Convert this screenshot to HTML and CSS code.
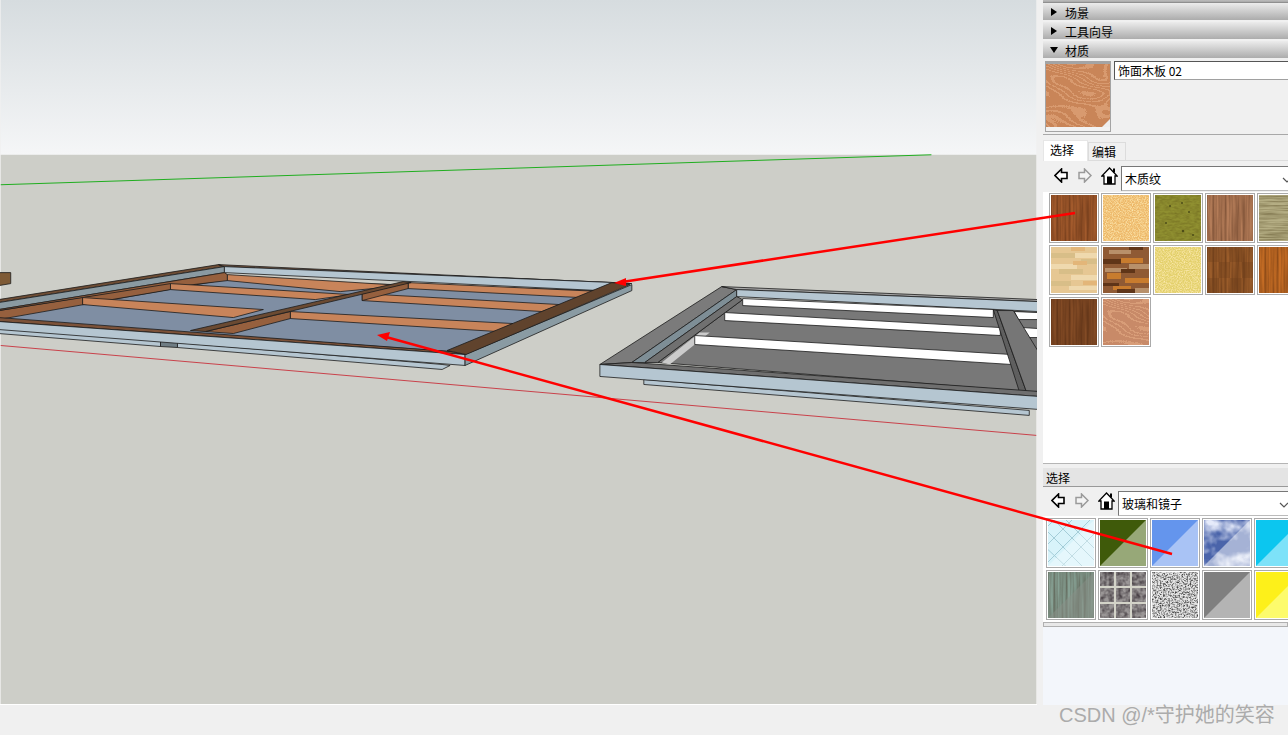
FILE: index.html
```html
<!DOCTYPE html>
<html lang="zh">
<head>
<meta charset="utf-8">
<title>材质</title>
<link rel="stylesheet" href="styles.css">
</head>
<body>
<svg class="defs" width="0" height="0" aria-hidden="true">
  <defs>
    <linearGradient id="sky" x1="0" y1="0" x2="0" y2="1"><stop offset="0" stop-color="#d6dcdf"/><stop offset="1" stop-color="#f5f6f7"/></linearGradient>
    <filter id="grainV" x="0" y="0" width="100%" height="100%" color-interpolation-filters="sRGB"><feTurbulence type="fractalNoise" baseFrequency=".5 .02" numOctaves="2" seed="4"/><feColorMatrix values="0 0 0 0 .15 0 0 0 0 .05 0 0 0 0 0 .7 0 0 0 -.2"/><feMerge><feMergeNode in="SourceGraphic"/><feMergeNode/></feMerge></filter>
    <filter id="grainH" x="0" y="0" width="100%" height="100%" color-interpolation-filters="sRGB"><feTurbulence type="fractalNoise" baseFrequency=".03 .6" numOctaves="3" seed="9"/><feColorMatrix values="0 0 0 0 .3 0 0 0 0 .25 0 0 0 0 .1 1 0 0 0 -.33"/><feMerge><feMergeNode in="SourceGraphic"/><feMergeNode/></feMerge></filter>
    <filter id="speck" x="0" y="0" width="100%" height="100%" color-interpolation-filters="sRGB"><feTurbulence type="fractalNoise" baseFrequency=".85" numOctaves="2" seed="7"/><feColorMatrix values="0 0 0 0 1 0 0 0 0 .93 0 0 0 0 .72 2 0 0 0 -.75"/><feMerge><feMergeNode in="SourceGraphic"/><feMergeNode/></feMerge></filter>
    <filter id="soft" x="0" y="0" width="100%" height="100%" color-interpolation-filters="sRGB"><feTurbulence type="fractalNoise" baseFrequency=".2 .5" numOctaves="2" seed="3"/><feColorMatrix values="0 0 0 0 .3 0 0 0 0 .25 0 0 0 0 .05 .6 0 0 0 -.2"/><feMerge><feMergeNode in="SourceGraphic"/><feMergeNode/></feMerge></filter>
    <filter id="swirl" x="0" y="0" width="100%" height="100%" color-interpolation-filters="sRGB"><feTurbulence type="fractalNoise" baseFrequency=".014 .03" numOctaves="2" seed="12"/><feComponentTransfer><feFuncR type="discrete" tableValues="0 0 1 0 0 1 0 0 1 0 0 1 0 0 1 0 0 1 0 0 1 0 0 1 0 0 1 0 0 1 0 0 1 0 0 1 0 0 1 0 0 1"/></feComponentTransfer><feColorMatrix values="0 0 0 0 .93 0 0 0 0 .72 0 0 0 0 .56 .42 0 0 0 0"/><feMerge><feMergeNode in="SourceGraphic"/><feMergeNode/></feMerge></filter>
    <filter id="clouds" x="0" y="0" width="100%" height="100%" color-interpolation-filters="sRGB"><feTurbulence type="fractalNoise" baseFrequency=".06" numOctaves="3" seed="5"/><feColorMatrix values="0 0 0 0 .9 0 0 0 0 .92 0 0 0 0 .98 2.4 0 0 0 -1"/><feMerge><feMergeNode in="SourceGraphic"/><feMergeNode/></feMerge></filter>
    <filter id="stone" x="0" y="0" width="100%" height="100%" color-interpolation-filters="sRGB"><feTurbulence type="fractalNoise" baseFrequency=".6" numOctaves="2" seed="8"/><feColorMatrix values="0 0 0 0 .25 0 0 0 0 .25 0 0 0 0 .25 2.6 0 0 0 -1.05"/><feMerge><feMergeNode in="SourceGraphic"/><feMergeNode/></feMerge></filter>
    <filter id="slate" x="0" y="0" width="100%" height="100%" color-interpolation-filters="sRGB"><feTurbulence type="fractalNoise" baseFrequency=".22" numOctaves="2" seed="6"/><feColorMatrix values="0 0 0 0 .25 0 0 0 0 .22 0 0 0 0 .24 1.8 0 0 0 -.6"/><feMerge><feMergeNode in="SourceGraphic"/><feMergeNode/></feMerge></filter>
    <symbol id="back" viewBox="0 0 14 15"><path d="M7.500 1 1 7.500 7.500 14V10.500H13V4.500H7.500Z" fill="#fff" stroke="#000" stroke-width="1.600"/></symbol>
    <symbol id="fwd" viewBox="0 0 14 15"><path d="M6.500 1 13 7.500 6.500 14V10.500H1V4.500H6.500Z" fill="#f4f4f4" stroke="#9a9a9a" stroke-width="1.500"/></symbol>
    <symbol id="home" viewBox="0 0 17 18"><path d="M8.500 1 .8 9H3V17H14V9H16.200Z" fill="#fff" stroke="#000" stroke-width="1.300"/><rect x="6" y="9.500" width="5" height="7.500" fill="#000"/><rect x="12" y="1.500" width="2" height="4" fill="#000"/></symbol>
  </defs>
</svg>

<div class="app">
  <div class="workspace">
    <svg class="scene" width="1037" height="705" viewBox="0 0 1037 705">
      <rect width="1037" height="156" fill="url(#sky)"/>
      <rect y="155" width="1037" height="550" fill="#cdcec8"/>
      <line x1="0" y1="185" x2="932" y2="155" stroke="#1fae1f" stroke-width="1"/>
      <line x1="0" y1="346" x2="1037" y2="436" stroke="#c9414a" stroke-width="1"/>

      <g stroke="#1c1c1c" stroke-width=".8" stroke-linejoin="round">
        <!-- stub at left -->
        <polygon points="-2,273 10,273 10,284 -2,286" fill="#7e5a35"/>

        <!-- left frame -->
        <polygon points="-2,328 160,341 160,347 -2,334" fill="#b5c6d1"/>
        <polygon points="160,341 177,343 177,348 160,347" fill="#6f7d84"/>
        <polygon points="177,343 442,365 450,366 442,370 177,348" fill="#b5c6d1"/>
        <polygon points="-2,318 -2,322 225,282 225,275 -2,311" fill="#96603e"/>
        <polygon points="-2,320 225,280 600,291 450,352" fill="#7f8ea3"/>
        <polygon points="-2,300 218,265 224,267 -2,303" fill="#6e4d35"/>
        <polygon points="-2,303 224,267 224,273 -2,310" fill="#8a9aa2"/>
        <polygon points="-2,310 224,273 227,275 227,281 82,298 -2,311" fill="#96603e"/>
        <polygon points="82,298 170,284 170,290 82,305" fill="#96603e"/>
        <polygon points="218,265 632,284 615,283 224,267" fill="#7b5a44"/>
        <polygon points="224,267 615,283 600,291 224,273" fill="#b5c6d1"/>

        <polygon points="227,275 405,286 340,292 227,281" fill="#c8845a"/>
        <polygon points="408,283 603,292 580,298 408,289" fill="#c8845a"/>
        <polygon points="170,284 350,295 315,300 170,290" fill="#c8845a"/>
        <polygon points="362,294 560,305 542,312 362,301" fill="#c8845a"/>
        <polygon points="82,298 263,310 233,318 82,305" fill="#c8845a"/>
        <polygon points="290,312 513,324 497,332 290,319" fill="#c8845a"/>

        <polygon points="205,332 290,312 290,319 233,334" fill="#96603e"/>
        <polygon points="362,294 408,283 408,289 362,301" fill="#96603e"/>
        <polygon points="190,331 403,282 411,283 205,332" fill="#6b4a32"/>

        <polygon points="-2,318 450,352 465,355 -2,322" fill="#7c5239"/>
        <polygon points="-2,322 465,355 465,366 -2,330" fill="#b5c6d1"/>
        <polygon points="465,355 632,285 632,291 465,366" fill="#8a9ba3"/>
        <polygon points="447,351 612,283 630,285 466,355" fill="#60432d"/>

        <!-- right frame -->
        <polygon points="644,380 1030,411 1030,416 644,385" fill="#b5c6d1"/>
        <polygon points="658,363 743,300 1039,313 1039,393" fill="#787878"/>
        <polygon points="600,365 722,287 737,290 632,363" fill="#7b7b7b"/>
        <polygon points="632,363 737,290 737,297 645,363" fill="#7e8e96"/>
        <polygon points="645,363 737,297 743,300 658,363" fill="#707070"/>
        <polygon points="662,363 700,333 710,333 670,365" fill="#cbcbcb" stroke="none"/>
        <polygon points="722,287 1039,300 1039,302 737,290" fill="#a5a5a5"/>
        <polygon points="737,290 1039,302 1039,312 737,297" fill="#b5c6d1"/>
        <polygon points="743,299 994,310 994,318 743,306" fill="#fff"/>
        <polygon points="725,313 1001,328 1001,336 725,321" fill="#fff"/>
        <polygon points="695,336 1012,355 1012,365 695,345" fill="#fff"/>
        <polygon points="1015,312 1039,313 1039,320 1019,320" fill="#fff"/>
        <polygon points="1023,328 1039,329 1039,338 1030,338" fill="#fff"/>
        <polygon points="994,310 998,311 1027,392 1020,392" fill="#5f5f5f"/>
        <polygon points="998,311 1014,311 1039,352 1039,392 1027,392" fill="#767676"/>
        <polygon points="632,363 1039,392 1039,397 600,365" fill="#6f6f6f"/>
        <polygon points="600,365 1039,397 1039,410 600,377" fill="#b5c6d1"/>
      </g>
    </svg>

    <aside class="panel">
      <div class="tray-top"></div>
      <div class="tray collapsed"><i class="tri right"></i>场景</div>
      <div class="tray collapsed"><i class="tri right"></i>工具向导</div>
      <div class="tray"><i class="tri down"></i>材质</div>

      <div class="summary">
        <div class="preview">
          <svg width="64" height="63"><rect width="64" height="63" fill="#c98558" filter="url(#swirl)"/><polygon points="64,55 64,63 56,63" fill="#eee"/></svg>
        </div>
        <div class="name">饰面木板 02</div>
      </div>

      <div class="tabs">
        <div class="tab active">选择</div>
        <div class="tab">编辑</div>
      </div>

      <div class="toolbar">
        <svg class="ic back"><use href="#back"/></svg>
        <svg class="ic fwd"><use href="#fwd"/></svg>
        <svg class="ic home"><use href="#home"/></svg>
        <div class="combo">木质纹<svg class="chev" width="10" height="6"><path d="M1 1 5 5 9 1" fill="none" stroke="#555" stroke-width="1.200"/></svg></div>
      </div>

      <div class="wells wood">
        <div class="row">
          <svg class="well"><rect width="46" height="46" fill="#a25a2c" filter="url(#grainV)"/></svg>
          <svg class="well"><rect width="46" height="46" fill="#edb869" filter="url(#speck)"/></svg>
          <svg class="well"><rect width="46" height="46" fill="#8f8f30" filter="url(#soft)"/><g fill="#4d4c18"><circle cx="15" cy="11" r="1"/><circle cx="27" cy="8" r="1"/><circle cx="34" cy="17" r="1"/><circle cx="11" cy="28" r="1"/><circle cx="28" cy="36" r="1.200"/><circle cx="38" cy="40" r="1"/></g></svg>
          <svg class="well"><rect width="46" height="46" fill="#b47c58" filter="url(#grainV)"/></svg>
          <svg class="well"><rect width="46" height="46" fill="#b5ae84" filter="url(#grainH)"/></svg>
        </div>
        <div class="row">
          <svg class="well"><rect width="46" height="46" fill="#e6c793"/><g fill="#d8be88"><rect y="6" width="24" height="5"/><rect x="30" y="12" width="16" height="5"/><rect x="8" y="22" width="24" height="5"/><rect y="34" width="20" height="5"/></g><g fill="#efd9ae"><rect x="24" y="6" width="22" height="5"/><rect y="17" width="26" height="5"/><rect x="20" y="28" width="26" height="5"/><rect x="18" y="39" width="28" height="4"/></g><g fill="#e3b679"><rect x="20" width="14" height="4"/><rect x="22" y="14" width="14" height="4"/><rect x="32" y="34" width="14" height="4"/></g></svg>
          <svg class="well"><rect width="46" height="46" fill="#8f5a34"/><g fill="#c87c2e"><rect x="18" y="11" width="22" height="5"/><rect x="4" y="26" width="14" height="6"/><rect x="22" y="31" width="24" height="5"/><rect x="10" y="39" width="18" height="4"/></g><g fill="#b8906a"><rect x="6" y="3" width="22" height="4"/><rect x="26" y="17" width="20" height="5"/><rect x="2" y="21" width="22" height="4"/><rect x="32" y="41" width="14" height="5"/></g><g fill="#5f3518"><rect y="12" width="18" height="5"/><rect x="18" y="22" width="14" height="4"/><rect y="36" width="16" height="3"/><rect x="26" y="0" width="14" height="3"/><rect x="14" y="42" width="18" height="4"/></g></svg>
          <svg class="well"><rect width="46" height="46" fill="#e3d06b" filter="url(#speck)"/></svg>
          <svg class="well"><rect width="46" height="46" fill="#9a5c2a" filter="url(#grainV)"/><g fill="#6b3d1a" opacity=".3"><rect width="12" height="15"/><rect x="23" width="12" height="15"/><rect x="12" y="15" width="11" height="16"/><rect x="35" y="15" width="11" height="16"/><rect y="31" width="12" height="15"/><rect x="23" y="31" width="12" height="15"/></g></svg>
          <svg class="well"><rect width="46" height="46" fill="#c46c24" filter="url(#grainV)"/></svg>
        </div>
        <div class="row">
          <svg class="well"><rect width="46" height="46" fill="#834b25" filter="url(#grainV)"/></svg>
          <svg class="well"><rect width="46" height="46" fill="#c88a68" filter="url(#swirl)"/></svg>
        </div>
      </div>

      <div class="sep"></div>

      <div class="sub-head">选择</div>
      <div class="toolbar second">
        <svg class="ic back"><use href="#back"/></svg>
        <svg class="ic fwd"><use href="#fwd"/></svg>
        <svg class="ic home"><use href="#home"/></svg>
        <div class="combo">玻璃和镜子<svg class="chev" width="10" height="6"><path d="M1 1 5 5 9 1" fill="none" stroke="#555" stroke-width="1.200"/></svg></div>
      </div>

      <div class="wells glass">
        <div class="row">
          <svg class="well"><rect width="46" height="46" fill="#d8f3fa"/><path d="M-10 16 16 -10M-10 34 34 -10M-4 46 46 -4M14 46 46 14M-2 10 36 48M-2 -8 48 42M10 -8 50 32M-6 24 24 52" stroke="#a4cdd8" stroke-width="1" fill="none"/><polygon points="46,0 46,46 0,46" fill="#fff" opacity=".35"/></svg>
          <svg class="well"><rect width="46" height="46" fill="#3f5a0a"/><polygon points="46,0 46,46 0,46" fill="#97a878"/></svg>
          <svg class="well"><rect width="46" height="46" fill="#6495ed"/><polygon points="46,0 46,46 0,46" fill="#a9c3f5"/></svg>
          <svg class="well"><rect width="46" height="46" fill="#4a64aa" filter="url(#clouds)"/><polygon points="46,0 46,46 0,46" fill="#fff" opacity=".5"/></svg>
          <svg class="well"><rect width="46" height="46" fill="#0cc6ef"/><polygon points="46,0 46,46 0,46" fill="#7de2f9"/></svg>
        </div>
        <div class="row">
          <svg class="well"><rect width="46" height="46" fill="#86a093" filter="url(#grainV)"/><polygon points="46,0 46,46 0,46" fill="#8a8f88" opacity=".5"/></svg>
          <svg class="well"><rect width="46" height="46" fill="#9a9696" filter="url(#slate)"/><path d="M15 0V46M31 0V46M0 15H46M0 31H46" stroke="#d3d3c8" stroke-width="2" fill="none"/></svg>
          <svg class="well"><rect width="46" height="46" fill="#e4e4e4" filter="url(#stone)"/></svg>
          <svg class="well"><rect width="46" height="46" fill="#7f7f7f"/><polygon points="46,0 46,46 0,46" fill="#b4b4b4"/></svg>
          <svg class="well"><rect width="46" height="46" fill="#fdf01a"/><polygon points="46,0 46,46 0,46" fill="#fdfb6c"/></svg>
        </div>
      </div>
      <div class="hscroll"></div>
      <div class="rest"></div>
    </aside>
  </div>
  <footer class="status"></footer>

  <svg class="arrows" width="1288" height="735" viewBox="0 0 1288 735">
    <g stroke="#f00" stroke-width="2.500" fill="#f00">
      <line x1="1075" y1="213" x2="622" y2="282"/>
      <polygon points="614,283 626,278 626,286" stroke="none"/>
      <line x1="1172" y1="554" x2="386" y2="337"/>
      <polygon points="377,335 390,332 387,341" stroke="none"/>
    </g>
  </svg>
  <div class="watermark">CSDN @/*守护她的笑容</div>
</div>
</body>
</html>
```

FILE: styles.css
```css
* { box-sizing: border-box; }

html, body {
  margin: 0;
  width: 1288px;
  height: 735px;
  overflow: hidden;
  background: #f0f0f0;
  font-family: "Noto Sans CJK SC", "Liberation Sans", sans-serif;
  font-size: 12px;
  color: #000;
}

.defs { position: absolute; }

.app {
  position: relative;
  width: 1288px;
  height: 735px;
  display: flex;
  flex-direction: column;
}

.workspace {
  display: flex;
  height: 705px;
}

.scene {
  display: block;
  flex: none;
  border-bottom: 1px solid #fff;
}

.panel {
  flex: 1;
  min-width: 0;
  overflow: hidden;
  padding-left: 6px;
  display: flex;
  flex-direction: column;
  background: #f0f0f0;
}

.tray-top {
  flex: none;
  height: 3px;
  background: linear-gradient(#bdbdbd, #a8a8a8);
  border-bottom: 1px solid #8f8f8f;
}

.tray {
  flex: none;
  height: 17px;
  margin-bottom: 2px;
  padding-left: 22px;
  position: relative;
  line-height: 19px;
  background: linear-gradient(#ececec, #dcdcdc 25%, #acacac);
  white-space: nowrap;
}

.tri {
  position: absolute;
  left: 8px;
  width: 0;
  height: 0;
  border-style: solid;
  border-color: transparent;
}

.tri.right {
  top: 5px;
  border-width: 4px 0 4px 6px;
  border-left-color: #000;
}

.tri.down {
  top: 6px;
  left: 7px;
  border-width: 6px 4px 0 4px;
  border-top-color: #000;
}

.summary {
  flex: none;
  display: flex;
  align-items: flex-start;
  gap: 3px;
  height: 75px;
  padding: 1px 0 0 2px;
  border-bottom: 1px solid #a8a8a8;
}

.preview {
  flex: none;
  width: 66px;
  height: 71px;
  border: 1px solid #a4a4a4;
  border-top-width: 3px;
  background: #f2f2f2;
}

.preview svg { display: block; }

.name {
  flex: none;
  width: 220px;
  height: 19px;
  padding-left: 3px;
  line-height: 18px;
  background: #fff;
  border: 1px solid #a0a0a0;
  border-top-color: #555;
  border-left-color: #555;
  white-space: nowrap;
}

.tabs {
  flex: none;
  display: flex;
  align-items: flex-end;
  height: 26px;
  background: #f0f0f0;
  border-bottom: 1px solid #dcdcdc;
}

.tab {
  width: 38px;
  height: 18px;
  padding-left: 3px;
  line-height: 17px;
  border: 1px solid #dcdcdc;
  border-bottom: 0;
}

.tab.active {
  width: 45px;
  height: 21px;
  margin-bottom: -1px;
  padding-left: 6px;
  line-height: 17px;
  background: #fff;
  border-color: #e6e6e6;
}

.toolbar {
  flex: none;
  height: 31px;
  margin-left: 3px;
  padding: 5px 0 0 8px;
  display: flex;
  align-items: flex-start;
  background: #f0f0f0;
  position: relative;
}

.toolbar.second {
  height: 29px;
  margin-left: 0;
  padding: 4px 0 0 8px;
}

.ic { display: block; flex: none; }
.ic.back { width: 14px; height: 15px; margin-top: 2px; }
.ic.fwd { width: 14px; height: 15px; margin: 2px 0 0 10px; }
.ic.home { width: 17px; height: 18px; margin: 1px 0 0 9px; }

.combo {
  flex: none;
  width: 200px;
  height: 25px;
  margin-left: 3px;
  padding-left: 3px;
  line-height: 23px;
  background: #fff;
  border: 1px solid #bbb;
  border-top-color: #777;
  border-left-color: #777;
  position: relative;
  white-space: nowrap;
}

.chev {
  position: absolute;
  left: 160px;
  top: 10px;
}

.wells {
  flex: none;
  background: #fff;
  display: flex;
  flex-direction: column;
  gap: 2px;
}

.wells.wood {
  height: 271px;
  padding: 1px 0 0 6px;
}

.wells.glass {
  height: 106px;
  padding: 2px 0 0 3px;
}

.row {
  display: flex;
  gap: 2px;
  width: 300px;
}

.well {
  display: block;
  flex: none;
  width: 50px;
  height: 50px;
  padding: 1px;
  background: #fff;
  border: 1px solid #999;
  outline: 1px solid #aaa;
  outline-offset: -1px;
  overflow: hidden;
}

.sep {
  flex: none;
  height: 5px;
  border-top: 1px solid #b5b5b5;
  background: #f0f0f0;
}

.sub-head {
  flex: none;
  height: 19px;
  padding-left: 3px;
  line-height: 20px;
  background: #e4e4e4;
  border-bottom: 1px solid #999;
}

.hscroll {
  flex: none;
  height: 5px;
  background: #e8e8e8;
  border: 1px solid #b0b0b0;
}

.rest {
  flex: 1;
  background: #f3f6fb;
}

.status {
  flex: 1;
  background: #f0f0f0;
}

.arrows {
  position: absolute;
  left: 0;
  top: 0;
  pointer-events: none;
}

.watermark {
  position: absolute;
  left: 1059px;
  top: 701px;
  font-family: "Liberation Sans", "Noto Sans CJK SC", sans-serif;
  font-size: 20px;
  line-height: 28px;
  color: #ababab;
  white-space: nowrap;
}
```
